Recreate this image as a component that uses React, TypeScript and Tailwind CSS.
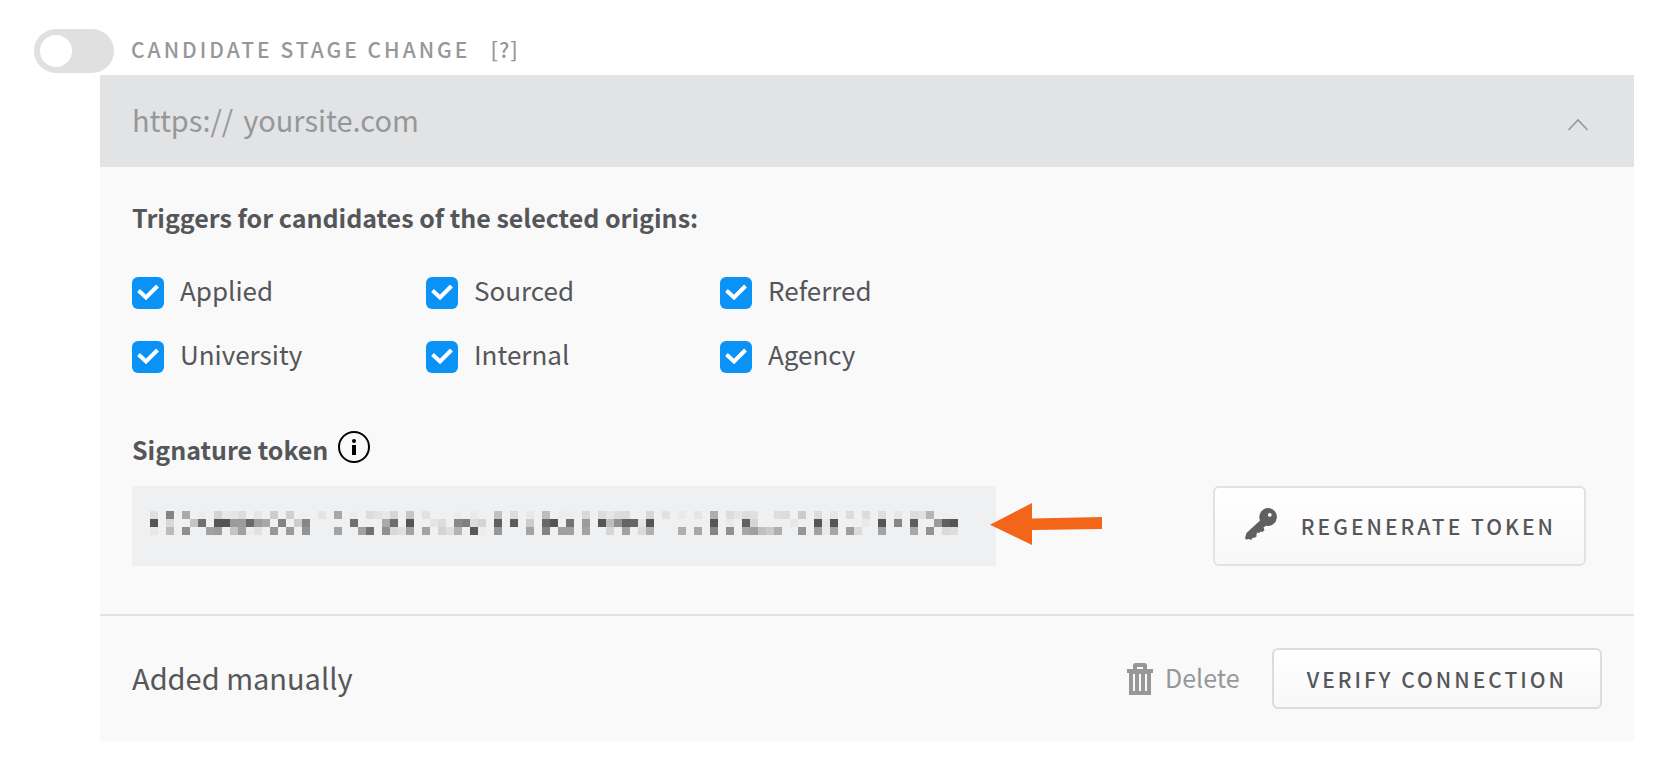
import React, { useState } from "react";

type Cell = [column: number, shade: string];

const TOKEN_ROWS: Cell[][] = [
  [
    [0, "e0"], [2, "84"], [4, "aa"], [6, "ec"], [8, "d4"], [9, "e7"], [10, "e5"], [11, "dd"], [13, "e6"], [15, "cd"],
    [17, "d0"], [21, "e4"], [23, "a8"], [25, "ec"], [27, "dc"], [28, "e2"], [29, "e8"], [30, "d6"], [32, "c5"], [34, "e1"],
    [38, "ec"], [40, "ea"], [43, "c0"], [45, "dc"], [47, "e8"], [49, "bd"], [51, "ec"], [52, "ec"], [54, "d9"], [56, "dc"],
    [57, "e6"], [58, "dc"], [59, "dc"], [62, "d7"], [64, "e0"], [66, "e9"], [68, "e5"], [70, "ad"], [72, "dc"], [73, "e6"],
    [74, "dd"], [75, "e0"], [78, "de"], [79, "dc"], [81, "cb"], [83, "dd"], [85, "e6"], [87, "dc"], [89, "dc"], [91, "de"],
    [93, "e6"], [95, "dc"], [96, "e0"], [97, "b5"],
  ],
  [
    [0, "55"], [2, "d8"], [5, "c4"], [6, "70"], [8, "56"], [9, "54"], [10, "9b"], [11, "9b"], [12, "6a"], [13, "9d"],
    [14, "a8"], [16, "82"], [18, "cc"], [19, "86"], [25, "70"], [29, "aa"], [30, "6d"], [32, "55"], [35, "e5"], [36, "dc"],
    [38, "88"], [39, "7f"], [40, "dc"], [41, "d4"], [43, "60"], [45, "5d"], [47, "cc"], [49, "69"], [50, "54"], [52, "72"],
    [54, "9b"], [56, "55"], [57, "bd"], [58, "92"], [59, "64"], [60, "66"], [61, "e4"], [62, "55"], [70, "55"], [72, "e9"],
    [74, "60"], [75, "d6"], [80, "e7"], [83, "55"], [84, "e6"], [85, "55"], [89, "e9"], [91, "55"], [93, "86"], [95, "5d"],
    [98, "9b"], [99, "60"], [100, "55"],
  ],
  [
    [0, "e7"], [2, "bb"], [4, "8e"], [7, "a2"], [8, "9d"], [10, "c5"], [11, "a0"], [12, "ec"], [13, "e1"], [15, "98"],
    [17, "9b"], [19, "94"], [23, "a3"], [26, "a2"], [27, "70"], [29, "90"], [30, "d9"], [31, "e0"], [32, "a2"], [34, "a2"],
    [36, "d4"], [37, "de"], [38, "b3"], [40, "58"], [41, "ec"], [43, "98"], [47, "a2"], [49, "82"], [51, "a0"], [52, "a0"],
    [54, "a2"], [57, "d5"], [59, "a0"], [61, "da"], [62, "b0"], [66, "ae"], [68, "a8"], [70, "85"], [72, "90"], [74, "a6"],
    [75, "9f"], [76, "c0"], [77, "ca"], [78, "ae"], [81, "96"], [83, "a2"], [84, "e9"], [85, "a6"], [87, "9d"], [88, "db"],
    [91, "a2"], [95, "a8"], [97, "92"], [99, "da"], [100, "de"],
  ],
];

const ORIGINS = ["Applied", "Sourced", "Referred", "University", "Internal", "Agency"];

function MaskedToken() {
  return (
    <svg className="h-6 w-[808px] max-w-full" viewBox="0 0 808 24" shapeRendering="crispEdges" role="img" aria-label="Hidden token">
      {TOKEN_ROWS.map((row, y) =>
        row.map(([x, shade]) => (
          <rect key={`${x}-${y}`} x={x * 8} y={y * 8} width="8" height="8" fill={`#${shade}${shade}${shade}`} />
        )),
      )}
    </svg>
  );
}

function Origin({ name }: { name: string }) {
  return (
    <label className="flex h-8 items-center gap-4">
      <span className="grid size-8 shrink-0">
        <input type="checkbox" defaultChecked className="peer col-start-1 row-start-1 size-8 appearance-none rounded-md border-2 border-[#cfcfcf] bg-white checked:border-0 checked:bg-[#0b92f6]" />
        <svg className="pointer-events-none invisible col-start-1 row-start-1 size-8 peer-checked:visible" viewBox="0 0 32 32" fill="none" stroke="#fff" strokeWidth="4">
          <path d="M6.5 13.5 14 20.5 25.5 9" />
        </svg>
      </span>
      <span className="-mt-1.5">{name}</span>
    </label>
  );
}

export default function App() {
  const [enabled, setEnabled] = useState(false);
  return (
    <main className="min-h-screen bg-white pt-[29px] pr-10 pb-6 pl-[34px] font-['Noto_Sans_CJK_SC',sans-serif] text-[25px] leading-8 text-[#55565a]">
      <div className="flex h-[46px] items-start text-[#969799]">
        <button
          type="button"
          role="switch"
          aria-checked={enabled}
          aria-labelledby="webhook-title"
          onClick={() => setEnabled(!enabled)}
          className={enabled ? "flex h-11 w-20 justify-end rounded-full bg-[#0b92f6] p-1.5" : "flex h-11 w-20 rounded-full bg-[#e0e0e0] p-1.5"}
        >
          <span className="size-8 rounded-full bg-white" />
        </button>
        <h2 id="webhook-title" className="ml-[17px] text-[21px] leading-10 font-medium tracking-[3px]">
          CANDIDATE STAGE CHANGE
        </h2>
        <a href="#help" className="ml-5 text-[21px] leading-10 font-medium tracking-[1px]">[?]</a>
      </div>

      <section className="ml-[66px] bg-[#f9f9f9]">
        <header className="flex h-[92px] items-center bg-[#e2e3e5] pr-11 pb-1 pl-8 text-[29px] text-[#969799]">
          <label htmlFor="url" className="mr-2.5 leading-12">https://</label>
          <input id="url" type="text" placeholder="yoursite.com" className="h-12 min-w-0 flex-1 bg-transparent leading-12 outline-none placeholder:text-[#969799]" />
          <button type="button" aria-label="Collapse" className="pt-3">
            <svg className="h-5 w-6" viewBox="0 0 24 20" fill="none" stroke="#969799" strokeWidth="1.6">
              <path d="M2.5 15 12 5l9.500 10" />
            </svg>
          </button>
        </header>

        <div className="px-8 pt-[34px] pb-12">
          <h3 className="font-bold">Triggers for candidates of the selected origins:</h3>
          <div className="mt-11 grid w-[882px] max-w-full grid-cols-3 gap-y-8 text-[26px]">
            {ORIGINS.map((name) => (
              <Origin key={name} name={name} />
            ))}
          </div>

          <div className="mt-[60px] flex h-8 items-center gap-2.5">
            <h3 className="font-bold">Signature token</h3>
            <svg className="-mt-1 size-8" viewBox="0 0 32 32" role="img" aria-label="Information">
              <circle cx="16" cy="16" r="15" fill="none" stroke="#000" strokeWidth="2" />
              <circle cx="16" cy="10" r="2" />
              <path d="M14 14h4v10h-4z" />
            </svg>
          </div>

          <div className="mt-[21px] flex items-center pr-4">
            <div className="flex h-20 w-[864px] min-w-0 items-center bg-[#eff0f2] pb-1.5 pl-[18px]">
              <MaskedToken />
            </div>
            <svg className="-ml-1.5 mb-1 h-[42px] w-28 shrink-0" viewBox="0 0 112 42" aria-hidden="true">
              <path d="M0 21.700 42 0v15.500l70-1.500v12l-70 1v15z" fill="#f36519" />
            </svg>
            <button type="button" className="ml-auto flex h-20 shrink-0 items-center gap-6 rounded-md border-2 border-[#e2e2e2] bg-linear-to-b from-white to-[#f8f8f8] pr-7 pl-[30px] text-[21px] font-medium tracking-[3px]">
              <svg className="mb-1 size-8" viewBox="0 0 32 32" fill="#5f6062">
                <path fillRule="evenodd" d="M23 0a9 9 0 1 1-2 17.800L18.500 19.500l1 2.500-2 2-2-.5-1 1.500-2-.5-1 1.500 0 2.500-1.500 1-2.500.5-1.500 2-2-1-3 .5-1-1.500L1.500 25 15 12.500A9 9 0 0 1 23 0zm1.800 5a1.900 1.900 0 1 0 0 3.800 1.900 1.900 0 0 0 0-3.800z" />
              </svg>
              REGENERATE TOKEN
            </button>
          </div>
        </div>

        <footer className="flex items-center border-t-2 border-[#e2e2e2] p-8">
          <p className="-mt-1 text-[29px]">Added manually</p>
          <button type="button" className="ml-auto flex items-center gap-3 text-[#969799]">
            <svg className="h-8 w-[26px]" viewBox="0 0 26 32" fill="#969799">
              <path fillRule="evenodd" d="M6 6V2.500Q6 0 8.500 0h9Q20 0 20 2.500V6h6v4h-2v22H2V10H0V6zM10 4v2h6V4zM6 11v17h2V11zM12 11v17h2V11zM18 11v17h2V11z" />
            </svg>
            <span className="-mt-1">Delete</span>
          </button>
          <button type="button" className="ml-8 h-[61px] rounded-md border-2 border-[#dcdcdc] bg-linear-to-b from-white to-[#f8f8f8] px-[33px] text-[21px] font-medium tracking-[3px]">
            VERIFY CONNECTION
          </button>
        </footer>
      </section>
    </main>
  );
}
